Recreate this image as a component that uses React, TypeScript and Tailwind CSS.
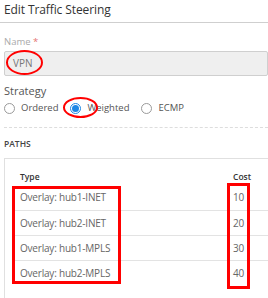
import React from "react";

const rows = [
  { type: "Overlay: hub1-INET", cost: "10" },
  { type: "Overlay: hub2-INET", cost: "20" },
  { type: "Overlay: hub1-MPLS", cost: "30" },
  { type: "Overlay: hub2-MPLS", cost: "40" },
];

function Radio({ checked, label }: { checked?: boolean; label: string }) {
  return (
    <label className="flex items-center gap-[6px]">
      <span
        className={`flex h-[11px] w-[11px] items-center justify-center rounded-full border bg-white ${
          checked ? "border-[#1e88e5]" : "border-[#9a9a9a]"
        }`}
      >
        {checked && <span className="h-[7px] w-[7px] rounded-full bg-[#1e88e5]" />}
      </span>
      <span className="text-[9.5px] leading-[14px] text-[#555]">{label}</span>
    </label>
  );
}

export default function App() {
  return (
    <div
      className="relative h-[298px] w-[268px] overflow-hidden bg-white"
      style={{ fontFamily: '"Open Sans", "Noto Sans", sans-serif' }}
    >
      <div className="flex h-[23px] items-center border-b border-[#cfcfcf] pb-[2px] pl-[4px] text-[12px] tracking-[-0.1px] text-[#333]">
        Edit Traffic Steering
      </div>
      <div className="pl-[4px]">
        <div className="mt-[12px] text-[9.5px] leading-[14px] text-[#aaa]">
          Name <span className="text-[#e57373]">*</span>
        </div>
        <div className="mt-[2px] flex h-[25px] items-center rounded-[2px] border border-[#cfcfcf] bg-[#efefef] pl-[8px] text-[10px] text-[#777]">
          VPN
        </div>
        <div className="mt-[8px] text-[11px] leading-[14px] text-[#555]">Strategy</div>
        <div className="mt-[3px] flex h-[14px] items-center gap-[12px]">
          <Radio label="Ordered" />
          <Radio checked label="Weighted" />
          <Radio label="ECMP" />
        </div>
        <div className="mt-[12px] border-t border-dashed border-[#ddd]" />
        <div className="mt-[10px] text-[8.5px] font-semibold leading-[12px] text-[#444]">PATHS</div>
        <div className="mt-[8px] h-[200px] border-l border-t border-[#e0e0e0] pl-[10px]">
          <div className="flex h-[26px] items-end pb-[1px] text-[8.5px] font-semibold text-[#333]">
            <div className="w-[218px] pl-[5px]">Type</div>
            <div>Cost</div>
          </div>
          {rows.map((r, i) => (
            <div
              key={r.type}
              className={`flex h-[25px] items-center text-[10px] tracking-[-0.2px] text-[#666] ${
                i > 0 ? "border-t border-[#e3e3e3]" : ""
              }`}
            >
              <div className="w-[218px] pl-[5px]">{r.type}</div>
              <div>{r.cost}</div>
            </div>
          ))}
        </div>
      </div>

      {/* annotations */}
      <div className="absolute left-[6px] top-[50px] h-[25px] w-[37px] rounded-[50%] border-2 border-[#ff0000]" />
      <div className="absolute left-[63px] top-[97px] h-[21px] w-[35px] rounded-[50%] border-2 border-[#ff0000]" />
      <div className="absolute left-[12px] top-[186px] h-[98px] w-[109px] border-[3px] border-[#ff0000]" />
      <div className="absolute left-[227px] top-[183px] h-[106px] w-[23px] border-[3px] border-[#ff0000]" />
    </div>
  );
}
